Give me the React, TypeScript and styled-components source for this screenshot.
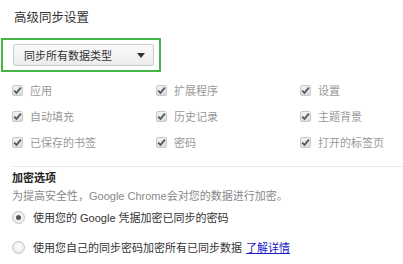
import React from 'react'
import styled, { createGlobalStyle } from 'styled-components'

const GlobalStyle = createGlobalStyle`
  html, body {
    margin: 0;
    padding: 0;
    background: #fff;
  }
  body {
    font-family: Arial, "Liberation Sans", "Noto Sans CJK SC", sans-serif;
    font-size: 11px;
    color: #333;
  }
`

const Page = styled.div`
  width: 403px;
  height: 264px;
  overflow: hidden;
  padding: 9px 0 0 12px;
  box-sizing: border-box;
`

const Title = styled.h3`
  margin: 0 0 0 2px;
  font-size: 12.5px;
  font-weight: normal;
  color: #333;
  line-height: 18px;
`

const Highlight = styled.div`
  margin: 11px 0 0 -11px;
  width: 160px;
  height: 34px;
  border: 2px solid #45b545;
  box-sizing: border-box;
  display: flex;
  align-items: center;
  padding-left: 10px;
`

const Select = styled.div`
  width: 141px;
  height: 22px;
  box-sizing: border-box;
  border: 1px solid #ccc;
  border-radius: 2px;
  background: linear-gradient(#fafafa, #ececec);
  display: flex;
  align-items: center;
  justify-content: space-between;
  padding: 0 8px 0 10px;
  font-size: 11px;
  color: #333;
`

const Arrow = styled.span`
  width: 0;
  height: 0;
  border-left: 4px solid transparent;
  border-right: 4px solid transparent;
  border-top: 5px solid #333;
`

const Grid = styled.div`
  display: grid;
  grid-template-columns: 144px 144px 1fr;
  row-gap: 8px;
  margin-top: 9px;
`

const Item = styled.label`
  display: flex;
  align-items: center;
  gap: 7px;
  height: 18px;
  color: #999;
`

const Box = styled.span`
  width: 11px;
  height: 11px;
  box-sizing: border-box;
  border: 1px solid #c8c8c8;
  border-radius: 2px;
  background: linear-gradient(#f2f2f2, #dcdcdc);
  display: flex;
  align-items: center;
  justify-content: center;
`

const Divider = styled.div`
  height: 1px;
  background: #e8e8e8;
  margin: 15px 0 0 0;
`

const SectionTitle = styled.h4`
  margin: 3px 0 0 0;
  font-size: 11px;
  font-weight: bold;
  color: #222;
  line-height: 16px;
`

const Desc = styled.div`
  color: #888;
  line-height: 16px;
  margin-top: 2px;
`

const RadioRow = styled.label<{ $top: number }>`
  display: flex;
  align-items: center;
  gap: 8px;
  height: 18px;
  margin-top: ${({ $top }) => $top}px;
  color: #333;
`

const Radio = styled.span<{ $on?: boolean }>`
  width: 13px;
  height: 13px;
  box-sizing: border-box;
  border-radius: 50%;
  border: 1px solid #c4c4c4;
  background: radial-gradient(circle at 50% 40%, #fff, #e2e2e2);
  display: flex;
  align-items: center;
  justify-content: center;
  &::after {
    content: '';
    display: ${({ $on }) => ($on ? 'block' : 'none')};
    width: 5px;
    height: 5px;
    border-radius: 50%;
    background: #555;
  }
`

const Link = styled.a`
  color: #1a1ac8;
  text-decoration: underline;
  margin-left: 4px;
`

const Check = () => (
  <svg width="9" height="9" viewBox="0 0 9 9">
    <path d="M1.2 4.6 L3.5 7 L7.8 1.6" fill="none" stroke="#555" strokeWidth="1.8" />
  </svg>
)

const types = ['应用', '扩展程序', '设置', '自动填充', '历史记录', '主题背景', '已保存的书签', '密码', '打开的标签页']

export default function App() {
  return (
    <>
      <GlobalStyle />
      <Page>
        <Title>高级同步设置</Title>
        <Highlight>
          <Select>
            同步所有数据类型
            <Arrow />
          </Select>
        </Highlight>
        <Grid>
          {types.map((t) => (
            <Item key={t}>
              <Box>
                <Check />
              </Box>
              {t}
            </Item>
          ))}
        </Grid>
        <Divider />
        <SectionTitle>加密选项</SectionTitle>
        <Desc>为提高安全性，Google Chrome会对您的数据进行加密。</Desc>
        <RadioRow $top={4}>
          <Radio $on />
          <span>使用您的 Google 凭据加密已同步的密码</span>
        </RadioRow>
        <RadioRow $top={12}>
          <Radio />
          <span>
            使用您自己的同步密码加密所有已同步数据
            <Link href="#">了解详情</Link>
          </span>
        </RadioRow>
      </Page>
    </>
  )
}
